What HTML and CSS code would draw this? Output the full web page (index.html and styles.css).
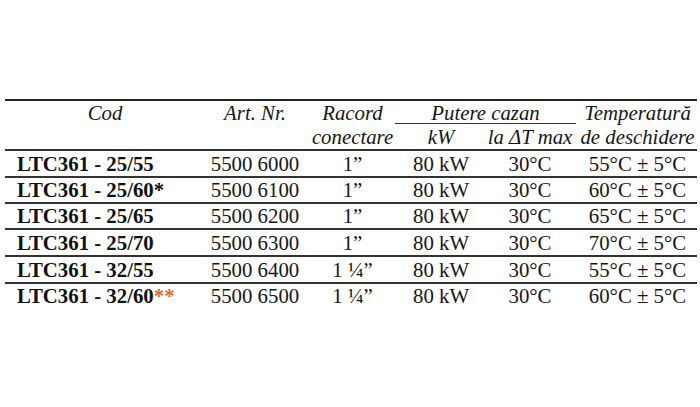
FILE: index.html
```html
<!DOCTYPE html>
<html lang="ro">
<head>
<meta charset="utf-8">
<link rel="stylesheet" href="styles.css">
</head>
<body>
<div class="table">
  <div class="head">
    <div class="h cod">Cod</div>
    <div class="h art">Art. Nr.</div>
    <div class="h racord">Racord<br>conectare</div>
    <div class="h putere"><span class="uline">Putere cazan</span></div>
    <div class="h kw">kW</div>
    <div class="h dt">la <span class="delta">ΔT</span> max</div>
    <div class="h temp">Temperatură<br>de deschidere</div>
  </div>
  <div class="row r27">
    <div class="c code">LTC361 - 25/55</div><div class="c">5500 6000</div><div class="c">1”</div><div class="c">80 kW</div><div class="c">30°C</div><div class="c">55°C ± 5°C</div>
  </div>
  <div class="row r26">
    <div class="c code">LTC361 - 25/60*</div><div class="c">5500 6100</div><div class="c">1”</div><div class="c">80 kW</div><div class="c">30°C</div><div class="c">60°C ± 5°C</div>
  </div>
  <div class="row r26">
    <div class="c code">LTC361 - 25/65</div><div class="c">5500 6200</div><div class="c">1”</div><div class="c">80 kW</div><div class="c">30°C</div><div class="c">65°C ± 5°C</div>
  </div>
  <div class="row r27">
    <div class="c code">LTC361 - 25/70</div><div class="c">5500 6300</div><div class="c">1”</div><div class="c">80 kW</div><div class="c">30°C</div><div class="c">70°C ± 5°C</div>
  </div>
  <div class="row r27">
    <div class="c code">LTC361 - 32/55</div><div class="c">5500 6400</div><div class="c">1 ¼”</div><div class="c">80 kW</div><div class="c">30°C</div><div class="c">55°C ± 5°C</div>
  </div>
  <div class="row r26 last">
    <div class="c code">LTC361 - 32/60<span class="star">**</span></div><div class="c">5500 6500</div><div class="c">1 ¼”</div><div class="c">80 kW</div><div class="c">30°C</div><div class="c">60°C ± 5°C</div>
  </div>
</div>
</body>
</html>
```
FILE: styles.css
```css
html, body {
  margin: 0;
  padding: 0;
  background: #ffffff;
}
body {
  width: 700px;
  height: 407px;
  overflow: hidden;
  font-family: "Liberation Serif", "Times New Roman", serif;
  font-size: 20.8px;
  color: #161616;
}
.table {
  margin: 99px 0 0 5px;
  width: 692px;
  border-top: 2px solid #222;
}
.head {
  display: grid;
  grid-template-columns: 200px 100px 95px 82px 96px 119px;
  grid-template-rows: 24px 24px;
  font-style: italic;
  line-height: 24px;
  text-align: center;
}
.h { white-space: nowrap; }
.cod { grid-column: 1; grid-row: 1; }
.art { grid-column: 2; grid-row: 1; }
.racord { grid-column: 3; grid-row: 1 / 3; }
.putere { grid-column: 4 / 6; grid-row: 1; }
.uline {
  display: block;
  margin: 0 2px 0 -5px;
  height: 22px;
  border-bottom: 1.5px solid #333;
}
.kw { grid-column: 4; grid-row: 2; }
.dt { grid-column: 5; grid-row: 2; }
.temp { grid-column: 6; grid-row: 1 / 3; }
.delta { letter-spacing: 0; }
.row {
  display: grid;
  grid-template-columns: 200px 100px 95px 82px 96px 119px;
  align-items: center;
  border-top: 2px solid #333;
  text-align: center;
  white-space: nowrap;
}
.r27 { height: 25px; }
.r26 { height: 24px; }
.c { line-height: 24px; }
.code {
  text-align: left;
  padding-left: 12px;
  font-weight: bold;
  color: #111;
}
.star { color: #e0692e; }
```
